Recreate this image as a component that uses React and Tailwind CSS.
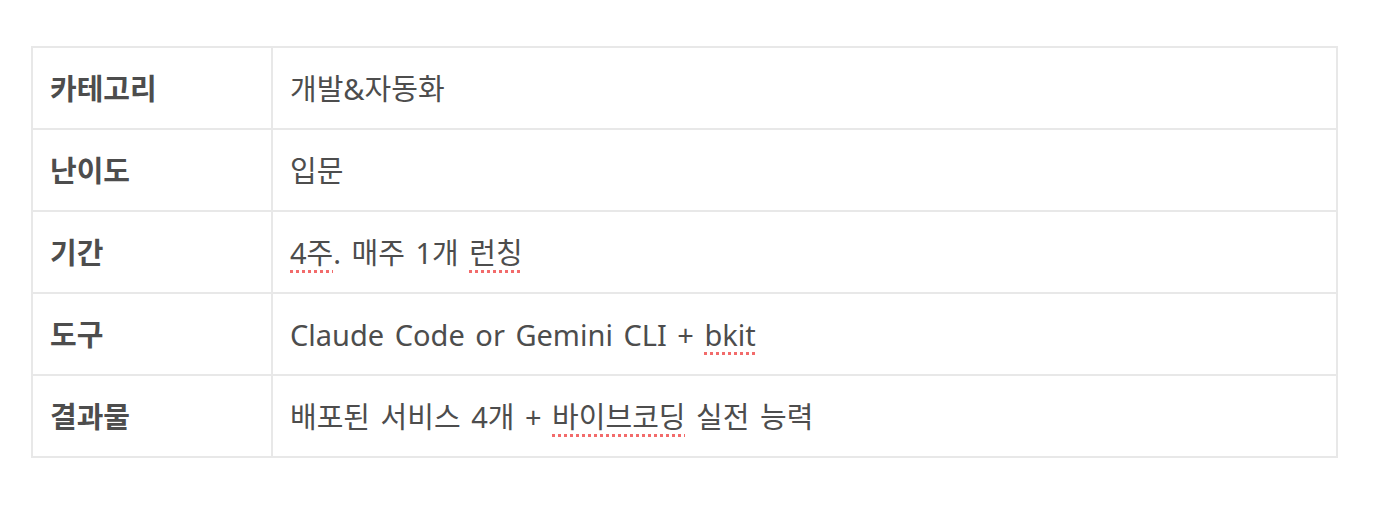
const rows = [
  { label: '카테고리', value: ['개발&자동화'] },
  { label: '난이도', value: ['입문'] },
  { label: '기간', value: [{ s: '4주' }, '. 매주 1개 ', { s: '런칭' }] },
  { label: '도구', value: ['Claude Code or Gemini CLI + ', { s: 'bkit' }] },
  { label: '결과물', value: ['배포된 서비스 4개 + ', { s: '바이브코딩' }, ' 실전 능력'] },
]

function Spell({ children }) {
  return (
    <span className="underline decoration-dotted decoration-[#f26b6b] decoration-[3px] underline-offset-[6px]">
      {children}
    </span>
  )
}

export default function App() {
  return (
    <div className="bg-white w-[1392px] h-[510px] pt-[46px] pl-[31px]"
      style={{ fontFamily: "'Noto Sans', 'Noto Sans CJK KR', sans-serif" }}>
      <table className="w-[1307px] border-collapse text-[29px] text-[#4d4d4d] [word-spacing:3px]">
        <tbody>
          {rows.map((r, i) => (
            <tr key={i} className="h-[82px]">
              <td className="w-[240px] border-2 border-[#e8e8e8] px-[17px] font-bold align-middle leading-none">{r.label}</td>
              <td className="border-2 border-[#e8e8e8] px-[17px] align-middle leading-none">
                {r.value.map((v, j) => typeof v === 'string' ? <span key={j}>{v}</span> : <Spell key={j}>{v.s}</Spell>)}
              </td>
            </tr>
          ))}
        </tbody>
      </table>
    </div>
  )
}
